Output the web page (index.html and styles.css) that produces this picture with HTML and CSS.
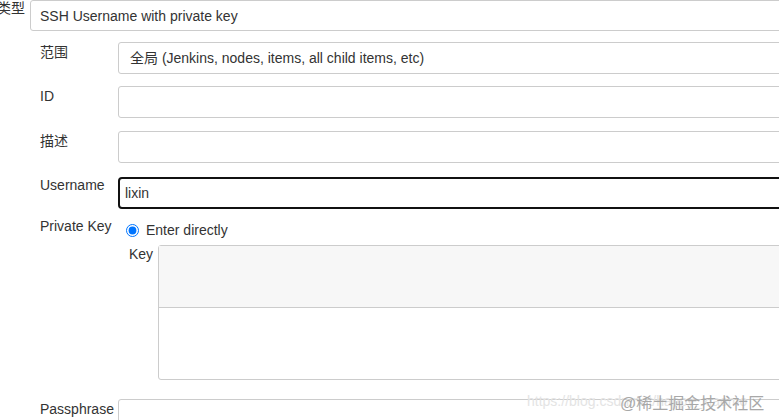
FILE: index.html
```html
<!DOCTYPE html>
<html lang="zh">
<head>
    <meta charset="UTF-8">
    <title>Credentials</title>
    <link rel="stylesheet" href="styles.css">
</head>
<body>
<div class="form">
    <div class="row first">
        <label class="lbl">类型</label>
        <div class="field">SSH Username with private key</div>
    </div>

    <div class="row">
        <label class="lbl">范围</label>
        <div class="field scope">全局 (Jenkins, nodes, items, all child items, etc)</div>
    </div>

    <div class="row">
        <label class="lbl">ID</label>
        <div class="field"></div>
    </div>

    <div class="row desc">
        <label class="lbl">描述</label>
        <div class="field"></div>
    </div>

    <div class="row user">
        <label class="lbl">Username</label>
        <div class="field focused">lixin</div>
    </div>

    <div class="row key-row">
        <label class="lbl">Private Key</label>
        <div class="key-col">
            <label class="radio"><input type="radio" name="pk" checked> Enter directly</label>
            <div class="sub">
                <label class="sublbl">Key</label>
                <div class="keybox">
                    <div class="keytop"></div>
                    <div class="keybottom"></div>
                </div>
            </div>
        </div>
    </div>

    <div class="row pass">
        <label class="lbl">Passphrase</label>
        <div class="field"></div>
    </div>
</div>

<div class="mark">
    <span class="url">https://blog.csdn.net/happy_xiaomo</span>
    <span class="brand">@稀土掘金技术社区</span>
</div>
</body>
</html>
```

FILE: styles.css
```css
body{
    margin: 0;
    font-family: "Liberation Sans", Arial, "Noto Sans CJK SC", sans-serif;
    font-size: 14px;
    color: #333;
    background: #fff;
    overflow: hidden;
    height: 420px;
    position: relative;
}
.form{
    display: flex;
    flex-direction: column;
    gap: 12px;
}
.row{
    display: flex;
    padding-left: 40px;
}
.lbl{
    width: 78px;
    flex: none;
    line-height: 16px;
    padding-top: 2px;
}
.field{
    width: 800px;
    flex: none;
    height: 32px;
    box-sizing: border-box;
    border: 1px solid #ccc;
    border-radius: 3px;
    padding: 0 11px;
    line-height: 30px;
    white-space: nowrap;
}
.first{
    padding-left: 0;
    margin-bottom: -1px;
}
.first .lbl{
    width: 33px;
    margin-left: -3px;
    padding-top: 0;
}
.first .field{
    height: 31px;
    padding-left: 9px;
}
.desc{
    margin-top: 1px;
}
.user{
    margin-top: 2px;
}
.user .lbl{
    padding-top: 0;
}
.focused{
    border: 2px solid #111;
    border-radius: 4px;
    padding-left: 5px;
    line-height: 29px;
}
.key-row{
    margin-top: -2px;
}
.key-row .lbl{
    padding-top: 0;
    margin-top: -1px;
}
.key-col{
    display: flex;
    flex-direction: column;
}
.radio{
    display: flex;
    align-items: center;
    height: 22px;
    padding-left: 6px;
    font-size: 14px;
}
.radio input{
    margin: 0 7px 0 2px;
    width: 13px;
    height: 13px;
}
.sub{
    display: flex;
    padding-left: 11px;
    margin-top: 4px;
}
.sublbl{
    width: 29px;
    flex: none;
    line-height: 16px;
    padding-top: 1px;
}
.keybox{
    width: 800px;
    flex: none;
    border: 1px solid #ccc;
    border-radius: 3px;
    display: flex;
    flex-direction: column;
}
.keytop{
    height: 61px;
    background: #f7f7f7;
    border-bottom: 1px solid #ccc;
}
.keybottom{
    height: 71px;
}
.pass{
    margin-top: 7px;
}
.pass .lbl{
    padding-top: 2px;
}

.mark{
    position: absolute;
    left: 527px;
    top: 389px;
    white-space: nowrap;
}
.url{
    color: #e4e4e4;
    font-size: 14px;
    position: absolute;
    top: 4px;
    left: 0;
}
.brand{
    position: absolute;
    left: 93px;
    top: 1px;
    font-size: 16px;
    color: #a8a8a8;
}
```
